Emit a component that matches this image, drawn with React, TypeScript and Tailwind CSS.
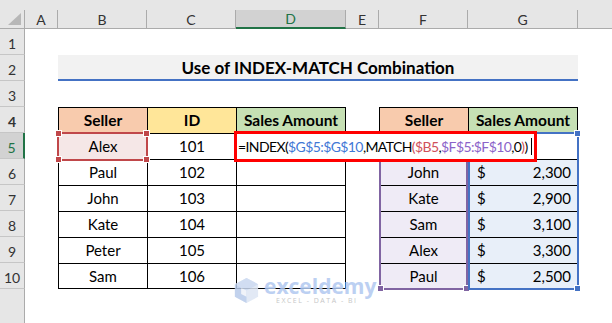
import React from 'react';

const hdrCols = [
  { l: 'A', w: 'w-[33px]', on: false },
  { l: 'B', w: 'w-[89px]', on: false },
  { l: 'C', w: 'w-[89px]', on: false },
  { l: 'D', w: 'w-[110px]', on: true },
  { l: 'E', w: 'w-[33px]', on: false },
  { l: 'F', w: 'w-[89px]', on: false },
  { l: 'G', w: 'w-[110px]', on: false },
];

const sellers = [
  ['Paul', '102'],
  ['John', '103'],
  ['Kate', '104'],
  ['Peter', '105'],
  ['Sam', '106'],
];

const lookup = [
  ['John', '2,300'],
  ['Kate', '2,900'],
  ['Sam', '3,100'],
  ['Alex', '3,300'],
  ['Paul', '2,500'],
];

const RowHead = ({ n, on = false }: { n?: number; on?: boolean }) => (
  <div
    className={`w-[25px] shrink-0 h-full flex items-center justify-center pt-[3px] text-[14px] border-b border-[#c6c6c6] ${
      on
        ? 'bg-[#d2d2d2] text-[#217346] border-r-2 border-r-[#217346]'
        : 'bg-[#e6e6e6] text-[#333] border-r border-r-[#ababab]'
    }`}
  >
    {n}
  </div>
);

const Handle = ({ className }: { className: string }) => (
  <span className={`absolute w-[7px] h-[7px] border border-white ${className}`} />
);

export default function App() {
  return (
    <div className="relative w-[612px] h-[323px] overflow-hidden bg-white text-black font-['Lato','Open_Sans',sans-serif] flex flex-col">
      {/* column headers */}
      <div className="h-[10px] bg-[#e6e6e6] shrink-0" />
      <div className="flex h-[19px] shrink-0 bg-[#e6e6e6] text-[14px] text-[#333]">
        <div className="w-[25px] shrink-0 border-r border-b border-[#ababab] relative">
          <svg className="absolute right-[3px] bottom-[3px]" width="13" height="12" viewBox="0 0 13 12">
            <polygon points="13,0 13,12 0,12" fill="#b7b7b7" />
          </svg>
        </div>
        {hdrCols.map((c) => (
          <div
            key={c.l}
            className={`${c.w} shrink-0 flex items-center justify-center border-r border-[#ababab] ${
              c.on ? 'bg-[#d2d2d2] text-[#217346] border-b-2 border-b-[#217346]' : 'border-b'
            }`}
          >
            {c.l}
          </div>
        ))}
        <div className="flex-1 border-b border-[#ababab]" />
      </div>

      {/* row 1 */}
      <div className="flex h-[26px] shrink-0">
        <RowHead n={1} />
      </div>

      {/* row 2 title */}
      <div className="flex h-[26px] shrink-0">
        <RowHead n={2} />
        <div className="w-[33px] shrink-0" />
        <div className="w-[520px] shrink-0 bg-[#f2f2f2] border-b-2 border-[#4472c4] flex items-center justify-center pt-[2px] text-[17px] font-bold">
          Use of INDEX-MATCH Combination
        </div>
      </div>

      {/* row 3 */}
      <div className="flex h-[26px] shrink-0">
        <RowHead n={3} />
      </div>

      {/* row 4 headers */}
      <div className="flex h-[26px] shrink-0 text-[15.5px] font-bold">
        <RowHead n={4} />
        <div className="w-[33px] shrink-0" />
        <div className="w-[89px] shrink-0 bg-[#f8cbad] border-l border-t border-black flex items-center justify-center">Seller</div>
        <div className="w-[89px] shrink-0 bg-[#ffe699] border-l border-t border-black flex items-center justify-center">ID</div>
        <div className="w-[110px] shrink-0 bg-[#c6e0b4] border-l border-t border-r border-black flex items-center justify-center">Sales Amount</div>
        <div className="w-[33px] shrink-0" />
        <div className="w-[89px] shrink-0 bg-[#f8cbad] border-l border-t border-black flex items-center justify-center">Seller</div>
        <div className="w-[110px] shrink-0 bg-[#c6e0b4] border-l border-t border-r border-black flex items-center justify-center">Sales Amount</div>
      </div>

      {/* row 5 */}
      <div className="flex h-[26px] shrink-0 text-[15px]">
        <RowHead n={5} on />
        <div className="w-[33px] shrink-0" />
        <div className="w-[89px] shrink-0 bg-[#f5e7e7] border-l border-t border-black flex items-center justify-center">Alex</div>
        <div className="w-[89px] shrink-0 border-l border-t border-black flex items-center justify-center">101</div>
        <div className="w-[110px] shrink-0 border-l border-t border-r border-black" />
        <div className="w-[33px] shrink-0" />
        <div className="w-[89px] shrink-0 border-t border-black" />
        <div className="w-[110px] shrink-0 border-t border-black" />
      </div>

      {/* rows 6-10 */}
      {sellers.map(([name, id], i) => (
        <div key={id} className="flex h-[26px] shrink-0 text-[15px]">
          <RowHead n={6 + i} />
          <div className="w-[33px] shrink-0" />
          <div className={`w-[89px] shrink-0 border-l border-t border-black flex items-center justify-center ${i === 4 ? 'border-b' : ''}`}>
            {name}
          </div>
          <div className={`w-[89px] shrink-0 border-l border-t border-black flex items-center justify-center ${i === 4 ? 'border-b' : ''}`}>
            {id}
          </div>
          <div className={`w-[110px] shrink-0 border-l border-t border-r border-black ${i === 4 ? 'border-b' : ''}`} />
          <div className="w-[33px] shrink-0" />
          <div className="w-[89px] shrink-0 bg-[#efebf6] border-t border-black flex items-center justify-center">
            {lookup[i][0]}
          </div>
          <div className="w-[110px] shrink-0 bg-[#e8eff9] border-t border-black flex items-center justify-between pl-[9px] pr-[7px]">
            <span>$</span>
            <span>{lookup[i][1]}</span>
          </div>
        </div>
      ))}

      {/* below */}
      <div className="flex flex-1">
        <div className="w-[25px] shrink-0 bg-[#e6e6e6] border-r border-[#ababab]" />
      </div>

      {/* selection on B5 */}
      <div className="absolute left-[57px] top-[132px] w-[91px] h-[29px] border-2 border-[#c0474a]">
        <Handle className="-left-[4px] -top-[4px] bg-[#c0474a]" />
        <Handle className="-right-[4px] -top-[4px] bg-[#c0474a]" />
        <Handle className="-left-[4px] -bottom-[4px] bg-[#c0474a]" />
        <Handle className="-right-[4px] -bottom-[4px] bg-[#c0474a]" />
      </div>

      {/* reference ranges */}
      <div className="absolute left-[379px] top-[132px] w-[89px] h-[158px] border-2 border-[#8064a2]">
        <Handle className="-left-[4px] -bottom-[4px] bg-[#8064a2]" />
        <Handle className="-right-[4px] -bottom-[4px] bg-[#8064a2]" />
      </div>
      <div className="absolute left-[468px] top-[132px] w-[111px] h-[158px] border-2 border-[#4472c4]">
        <Handle className="-right-[4px] -top-[4px] bg-[#4472c4]" />
        <Handle className="-right-[4px] -bottom-[4px] bg-[#4472c4]" />
      </div>

      {/* in-cell formula editor */}
      <div className="absolute left-[234px] top-[131px] w-[303px] h-[31px] bg-white border-[3px] border-[#ff0000] flex items-center pl-[1px] text-[14px] tracking-[-0.6px] whitespace-nowrap">
        <span>=INDEX(</span>
        <span className="text-[#3f78d6]">$G$5:$G$10</span>
        <span>,MATCH</span>
        <span className="text-[#d0505a]">(</span>
        <span className="text-[#d0505a]">$B5</span>
        <span>,</span>
        <span className="text-[#8b63c9]">$F$5:$F$10</span>
        <span>,0</span>
        <span className="text-[#d0505a]">)</span>
        <span>)</span>
        <span className="ml-[3px] w-px h-[17px] bg-black" />
      </div>

      {/* watermark */}
      <div className="absolute left-[234px] top-[276px] flex items-start gap-[5px] opacity-85 pointer-events-none">
        <svg width="25" height="29" viewBox="0 0 28 30">
          <polygon points="14,1 27,8 27,22 14,29 1,22 1,8" fill="#dde6f4" />
          <polygon points="14,1 27,8 14,15 1,8" fill="#c9d8f0" />
          <polygon points="1,8 14,15 14,29 1,22" fill="#b8cbea" />
          <polygon points="8,12 14,15 14,22 8,19" fill="#eef2f9" />
        </svg>
        <div className="flex flex-col">
          <span className="text-[21px] leading-[20px] font-bold text-[#b1c8f0] font-['Open_Sans',sans-serif]">exceldemy</span>
          <span className="ml-[12px] mt-[1px] text-[7px] leading-[8px] text-[#bdbdbd] tracking-[1.5px] font-['Open_Sans',sans-serif]">EXCEL - DATA - BI</span>
        </div>
      </div>
    </div>
  );
}
